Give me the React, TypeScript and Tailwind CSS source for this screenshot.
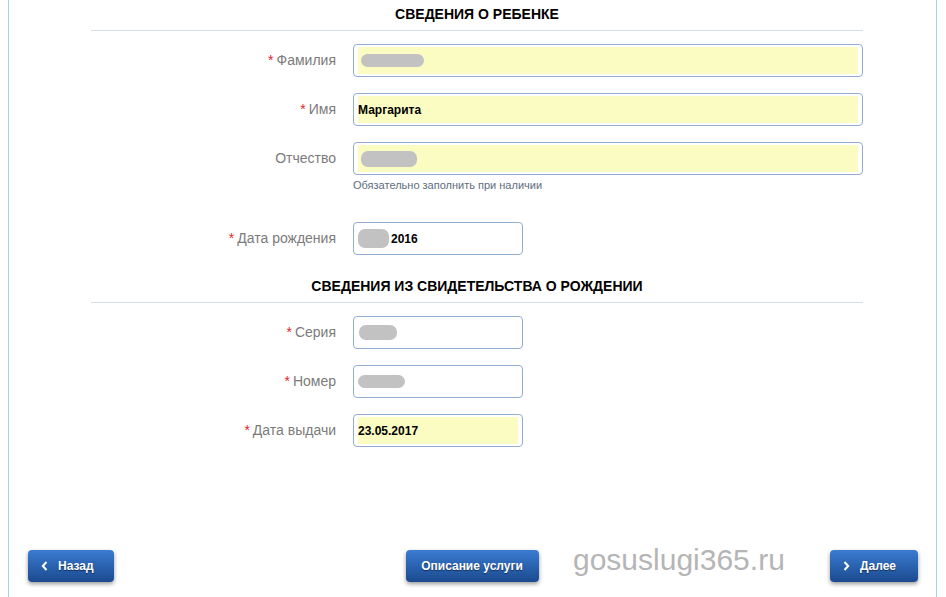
import React from "react";

const Blob = ({ w, h = 14 }: { w: number; h?: number }) => (
  <div
    className="rounded-[7px] bg-[#c2c2c2] blur-[0.6px]"
    style={{ width: w, height: h }}
  />
);

const Field = ({
  label,
  required,
  yellow,
  narrow,
  children,
  hint,
}: {
  label: string;
  required?: boolean;
  yellow?: boolean;
  narrow?: boolean;
  children?: React.ReactNode;
  hint?: string;
}) => (
  <div className="flex items-start gap-[17px]">
    <div className="w-[245px] h-[33px] flex items-center justify-end text-[14px] text-[#7b7b7b]">
      {required && <span className="text-[#e5232b] mr-[3px]">*</span>}
      {label}
    </div>
    <div className="flex flex-col">
      <div
        className={
          "h-[33px] rounded-[4px] border border-[#93aed0] bg-white px-[4px] py-[2px] " +
          (narrow ? "w-[170px]" : "w-[510px]")
        }
      >
        <div
          className={
            "h-full flex items-center text-[12px] font-bold text-black " +
            (yellow ? "bg-[#fafcc1]" : "")
          }
        >
          {children}
        </div>
      </div>
      {hint && (
        <div className="mt-[3px] text-[11px] leading-[14px] text-[#5d6d80]">
          {hint}
        </div>
      )}
    </div>
  </div>
);

const Heading = ({ children }: { children: React.ReactNode }) => (
  <div className="h-[31px] flex items-center justify-center border-b border-[#d3e0e8] text-[14px] font-bold text-black pb-[1px]">
    {children}
  </div>
);

const Btn = ({
  children,
  w,
  dir,
}: {
  children: React.ReactNode;
  w: number;
  dir?: "l" | "r";
}) => (
  <div
    className={
      "h-[32px] rounded-[4px] bg-linear-to-b from-[#3a7cd2] to-[#1b4a8f] shadow-[0_2px_4px_rgba(0,0,0,0.4)] flex items-center gap-[10px] text-[12px] font-bold text-white [text-shadow:0_1px_1px_rgba(0,0,0,0.5)] " +
      (dir ? "justify-start pl-[13px]" : "justify-center")
    }
    style={{ width: w }}
  >
    {dir && (
      <svg width="7" height="10" viewBox="0 0 7 10" className="shrink-0">
        <path
          d={dir === "l" ? "M5.5 1 L1.8 5 L5.5 9" : "M1.5 1 L5.2 5 L1.5 9"}
          stroke="white"
          strokeWidth="2"
          fill="none"
        />
      </svg>
    )}
    <span>{children}</span>
  </div>
);

export default function App() {
  return (
    <div
      className="w-[946px] h-[597px] bg-white pl-[8px] relative overflow-hidden"
      style={{ fontFamily: '"Liberation Sans", Arial, sans-serif' }}
    >
      <div className="w-[929px] h-full border-x border-[#a3d6df] flex flex-col">
        <div className="ml-[82px] w-[772px] flex flex-col">
          <Heading>СВЕДЕНИЯ О РЕБЕНКЕ</Heading>
          <div className="flex flex-col gap-[16px] mt-[13px]">
            <Field label="Фамилия" required yellow>
              <div className="ml-[3px]">
                <Blob w={63} h={13} />
              </div>
            </Field>
            <Field label="Имя" required yellow>
              <span>Маргарита</span>
            </Field>
            <Field label="Отчество" yellow hint="Обязательно заполнить при наличии">
              <div className="ml-[3px]">
                <Blob w={56} h={16} />
              </div>
            </Field>
          </div>
          <div className="mt-[30px]">
            <Field label="Дата рождения" required narrow>
              <Blob w={31} h={19} />
              <span className="ml-[2px]">2016</span>
            </Field>
          </div>
          <div className="mt-[17px]">
            <Heading>СВЕДЕНИЯ ИЗ СВИДЕТЕЛЬСТВА О РОЖДЕНИИ</Heading>
          </div>
          <div className="flex flex-col gap-[16px] mt-[13px]">
            <Field label="Серия" required narrow>
              <div className="ml-[1px]">
                <Blob w={38} h={15} />
              </div>
            </Field>
            <Field label="Номер" required narrow>
              <Blob w={47} h={13} />
            </Field>
            <Field label="Дата выдачи" required narrow yellow>
              <span>23.05.2017</span>
            </Field>
          </div>
        </div>
        <div className="mt-auto mb-[15px] flex justify-between pl-[19px] pr-[18px]">
          <Btn w={86} dir="l">
            Назад
          </Btn>
          <Btn w={133}>Описание услуги</Btn>
          <Btn w={88} dir="r">
            Далее
          </Btn>
        </div>
      </div>
      <div className="absolute left-[573px] top-[545px] text-[30px] text-[#b5b5b5] leading-none">
        gosuslugi365.ru
      </div>
    </div>
  );
}
